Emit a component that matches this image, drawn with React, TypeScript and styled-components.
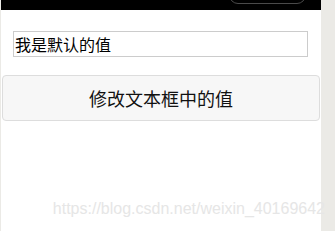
import styled, { createGlobalStyle } from "styled-components";
import { useState } from "react";

const GlobalStyle = createGlobalStyle`
  html, body {
    margin: 0;
    padding: 0;
    background: #ebeae6;
  }
  #root {
    height: 231px;
  }
`;

const Page = styled.div`
  position: relative;
  height: 231px;
  padding-left: 1px;
  display: flex;
  overflow: hidden;
`;

const Phone = styled.div`
  width: 320px;
  background: #ffffff;
  display: flex;
  flex-direction: column;
`;

const StatusBar = styled.div`
  height: 10px;
  background: #000;
  display: flex;
  justify-content: flex-end;
  align-items: flex-end;
  padding: 0 15px 6px 0;
  box-sizing: border-box;
  overflow: hidden;
`;

const Notch = styled.div`
  width: 77px;
  height: 18px;
  border: 1px solid #4a4a4a;
  border-radius: 10px;
  box-sizing: border-box;
  flex-shrink: 0;
`;

const TextInput = styled.input`
  margin: 21px 0 0 12px;
  width: 295px;
  height: 26px;
  box-sizing: border-box;
  border: 1px solid #cccccc;
  padding: 0 1px;
  font-family: "Noto Sans CJK SC", sans-serif;
  font-size: 16px;
  color: #000;
  outline: none;
`;

const ActionButton = styled.button`
  margin: 18px 0 0 1px;
  width: 318px;
  height: 46px;
  box-sizing: border-box;
  border: 1px solid #dddddd;
  border-radius: 4px;
  background: #f7f7f7;
  font-family: "Noto Sans CJK SC", sans-serif;
  font-size: 18px;
  color: #111;
  cursor: pointer;
`;

const Watermark = styled.div`
  position: absolute;
  right: 10px;
  top: 200px;
  font-family: "Liberation Sans", Arial, sans-serif;
  font-size: 16px;
  color: #e6e6e6;
  pointer-events: none;
  white-space: nowrap;
`;

export default function App() {
  const [value, setValue] = useState("我是默认的值");

  return (
    <>
      <GlobalStyle />
      <Page>
        <Phone>
          <StatusBar>
            <Notch />
          </StatusBar>
          <TextInput value={value} onChange={(e) => setValue(e.target.value)} />
          <ActionButton onClick={() => setValue("修改后的值")}>
            修改文本框中的值
          </ActionButton>
        </Phone>
        <Watermark>https://blog.csdn.net/weixin_40169642</Watermark>
      </Page>
    </>
  );
}
